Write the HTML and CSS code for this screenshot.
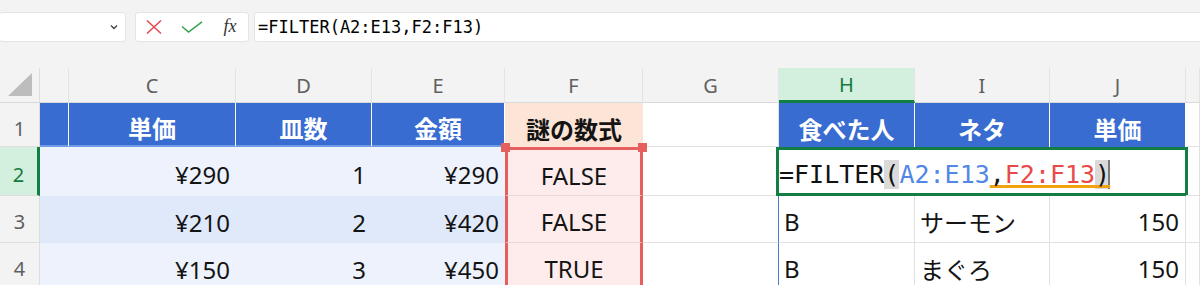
FILE: index.html
```html
<!DOCTYPE html>
<html lang="ja">
<head>
    <meta charset="UTF-8">
    <title>FILTER - sheet</title>
    <link rel="stylesheet" href="styles.css">
</head>
<body>
    <!-- Formula bar -->
    <div class="toolbar">
        <div class="namebox">
            <svg width="8" height="6" viewBox="0 0 8 6"><path d="M1 1.5 L4 4.5 L7 1.5" fill="none" stroke="#444" stroke-width="1.4"/></svg>
        </div>
        <div class="fbuttons">
            <span class="btn">
                <svg width="16" height="14" viewBox="0 0 16 14"><path d="M1 0.5 L15 13.5 M15 0.5 L1 13.5" stroke="#e5484d" stroke-width="1.5" fill="none"/></svg>
            </span>
            <span class="btn">
                <svg width="22" height="12" viewBox="0 0 22 12"><path d="M1 5.5 L7.5 11 L21 0.8" stroke="#33a352" stroke-width="1.5" fill="none"/></svg>
            </span>
            <span class="btn fx">fx</span>
        </div>
        <div class="fbar">=FILTER(A2:E13,F2:F13)</div>
    </div>

    <!-- Grid -->
    <div class="sheet">
        <div class="row hrow">
            <div class="c corner">
                <svg width="24" height="23" viewBox="0 0 24 23"><path d="M24 0 L24 23 L0 23 Z" fill="#bdbdbd"/></svg>
            </div>
            <div class="c ch"></div>
            <div class="c ch">C</div>
            <div class="c ch">D</div>
            <div class="c ch">E</div>
            <div class="c ch">F</div>
            <div class="c ch">G</div>
            <div class="c ch sel">H</div>
            <div class="c ch">I</div>
            <div class="c ch">J</div>
            <div class="c ch"></div>
        </div>

        <div class="row row1">
            <div class="c rh">1</div>
            <div class="c hd"></div>
            <div class="c hd">単価</div>
            <div class="c hd">皿数</div>
            <div class="c hd">金額</div>
            <div class="c hp">謎の数式</div>
            <div class="c"></div>
            <div class="c hd nb">食べた人</div>
            <div class="c hd nb">ネタ</div>
            <div class="c hd nb">単価</div>
            <div class="c"></div>
        </div>

        <div class="row row2">
            <div class="c rh sel">2</div>
            <div class="c b1"></div>
            <div class="c b1 r">¥290</div>
            <div class="c b1 r">1</div>
            <div class="c b1 r">¥290</div>
            <div class="c fcol ftop">FALSE</div>
            <div class="c"></div>
            <div class="c edit">=FILTER<span class="par">(</span><span class="ref1">A2:E13</span><span class="ul">,<span class="ref2">F2:F13</span><span class="par cur">)</span></span></div>
            <div class="c"></div>
        </div>

        <div class="row row3">
            <div class="c rh">3</div>
            <div class="c b2"></div>
            <div class="c b2 r">¥210</div>
            <div class="c b2 r">2</div>
            <div class="c b2 r">¥420</div>
            <div class="c fcol">FALSE</div>
            <div class="c gedge"></div>
            <div class="c">B</div>
            <div class="c">サーモン</div>
            <div class="c r">150</div>
            <div class="c"></div>
        </div>

        <div class="row row4">
            <div class="c rh">4</div>
            <div class="c b1"></div>
            <div class="c b1 r">¥150</div>
            <div class="c b1 r">3</div>
            <div class="c b1 r">¥450</div>
            <div class="c fcol">TRUE</div>
            <div class="c gedge"></div>
            <div class="c">B</div>
            <div class="c">まぐろ</div>
            <div class="c r">150</div>
            <div class="c"></div>
        </div>
    </div>
</body>
</html>
```

FILE: styles.css
```css
body {
    margin: 0;
    background: #fff;
    font-family: "Noto Sans", "Noto Sans CJK JP", sans-serif;
    overflow: hidden;
}

/* formula bar */
.toolbar {
    height: 68px;
    box-sizing: border-box;
    padding-top: 12px;
    background: #f3f3f3;
    display: flex;
    align-items: flex-start;
}
.namebox, .fbuttons, .fbar {
    height: 30px;
    box-sizing: border-box;
    background: #fff;
    border: 1px solid #e4e4e4;
    border-radius: 3px;
    display: flex;
    align-items: center;
}
.namebox {
    width: 127px;
    margin-left: -1px;
    justify-content: flex-end;
    padding-right: 7px;
}
.fbuttons {
    width: 114px;
    margin-left: 9px;
}
.btn {
    display: flex;
    justify-content: center;
    align-items: center;
}
.btn:nth-child(1) { width: 36px; }
.btn:nth-child(2) { width: 40px; }
.btn:nth-child(3) { width: 36px; }
.fx {
    font-family: "Liberation Serif", serif;
    font-style: italic;
    font-size: 18px;
    color: #333;
    margin-top: -2px;
}
.fbar {
    flex: 1;
    margin-left: 5px;
    margin-right: -4px;
    padding-left: 3px;
    font-family: "DejaVu Sans Mono", monospace;
    font-size: 17px;
    color: #000;
}

/* sheet */
.sheet {
    display: grid;
    grid-template-columns: 40px 29px 167px 136px 133px 138px 136px 136px 135px 136px 14px;
    grid-template-rows: 35px 44px 49px 47px 47px;
}
.row {
    display: contents;
}
.c {
    box-sizing: border-box;
    border-right: 1px solid #e1e1e1;
    border-bottom: 1px solid #e1e1e1;
    display: flex;
    align-items: center;
    padding: 0 5px;
    font-size: 24px;
    color: #141414;
    white-space: nowrap;
    overflow: hidden;
}
.r { justify-content: flex-end; padding-right: 6px; }

.row1 .c { padding-top: 7px; }
.row2 .c { padding-top: 6px; }
.row3 .c, .row4 .c { padding-top: 5px; }

.corner {
    background: #f3f3f3;
    justify-content: flex-end;
    align-items: flex-end;
    padding: 0 7px 6px 0;
    border-right-color: #dedede;
    border-bottom-color: #d9d9d9;
}
.ch {
    background: #f3f3f3;
    color: #606060;
    font-size: 20px;
    justify-content: center;
    border-right-color: #e3e3e3;
    border-bottom-color: #d9d9d9;
}
.ch.sel {
    background: #d3efdd;
    color: #137a41;
    border-bottom: 3px solid #137e43;
}
.rh {
    background: #f3f3f3;
    color: #606060;
    font-size: 20px;
    justify-content: center;
    border-right-color: #dedede;
    border-bottom-color: #dedede;
}
.rh.sel {
    background: #d3efdd;
    color: #137a41;
    border-right: 3px solid #137e43;
}

/* table header */
.hd {
    background: #386cd1;
    color: #fff;
    font-weight: 700;
    justify-content: center;
    border-right: 1px solid #fff;
    border-bottom: 2px solid #6e9ce8;
}
.hd.nb { border-bottom: none; }
.hp {
    background: #fce4d6;
    font-weight: 700;
    justify-content: center;
    border-right: none;
    border-bottom: none;
}

/* banded rows */
.b1, .b2 {
    border-right: none;
    border-bottom: none;
}
.b1 { background: #edf2fc; }
.b2 { background: #dfe9fa; }

/* F column range highlight */
.fcol {
    background: #fdeceb;
    justify-content: center;
    border-left: 3px solid #e65f5f;
    border-right: 3px solid #e65f5f;
    border-bottom: 1px solid #ead6d6;
}
.ftop {
    border-top: 3px solid #e65f5f;
    position: relative;
    overflow: visible;
}
.ftop::before, .ftop::after {
    content: "";
    position: absolute;
    top: -7px;
    width: 9px;
    height: 9px;
    background: #e65f5f;
}
.ftop::before { left: -7px; }
.ftop::after { right: -7px; }

.gedge { border-right-color: #4b78d0; }

/* cell being edited */
.edit {
    grid-column: span 3;
    margin: 0 -2px 0 -3px;
    border: 3px solid #137e43;
    padding: 16px 0 0 0;
    font-family: "DejaVu Sans Mono", monospace;
    font-size: 25px;
    color: #111;
    background: #fff;
}
.par { background: #dadada; }
.cur { box-shadow: inset -2px 0 #7a7a7a; }
.ref1 { color: #5387e6; }
.ref2 { color: #e84a4a; }
.ul {
    text-decoration: underline;
    text-decoration-color: #f2a20c;
    text-decoration-thickness: 3px;
    text-decoration-skip-ink: none;
    text-underline-offset: 2px;
}
```
